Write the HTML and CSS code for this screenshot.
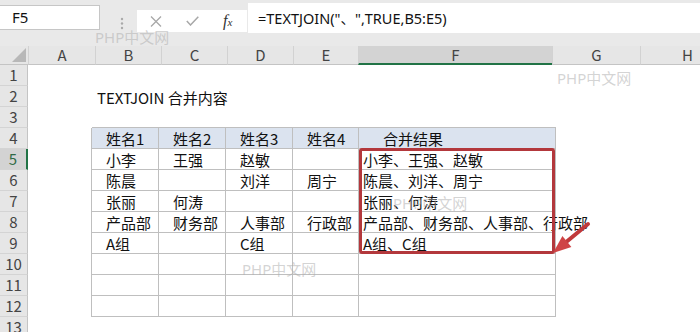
FILE: index.html
```html
<!DOCTYPE html>
<html lang="zh-CN">

<head>
    <meta charset="UTF-8">
    <meta name="viewport" content="width=device-width, initial-scale=1.0">
    <title>TEXTJOIN 合并内容</title>
    <link rel="stylesheet" href="styles.css">
</head>

<body>
    <div class="page">
        <!-- 编辑栏 -->
        <div class="topbar">
            <div class="namebox">F5</div>
            <div class="grip">
                <svg width="37" height="14" viewBox="0 0 37 14">
                    <circle cx="22" cy="2" r="1.2" fill="#a9a9a9"></circle>
                    <circle cx="22" cy="6.5" r="1.2" fill="#a9a9a9"></circle>
                    <circle cx="22" cy="11" r="1.2" fill="#a9a9a9"></circle>
                </svg>
            </div>
            <div class="fnbox">
                <svg class="fn-icon" width="12" height="11" viewBox="0 0 12 11">
                    <path d="M1 0.5 L11 10.5 M11 0.5 L1 10.5" stroke="#a8a8a8" stroke-width="1.3" fill="none"></path>
                </svg>
                <svg class="fn-icon" width="13" height="10" viewBox="0 0 13 10">
                    <path d="M0.8 5 L4.5 9 L12.3 0.8" stroke="#a8a8a8" stroke-width="1.5" fill="none"></path>
                </svg>
                <span class="fx"><i>f</i><i class="fx-x">x</i></span>
            </div>
            <div class="formula">=TEXTJOIN("、",TRUE,B5:E5)</div>
        </div>

        <!-- 列标 -->
        <div class="colheads">
            <div class="corner">
                <svg width="28" height="19" viewBox="0 0 28 19">
                    <polygon points="26,2 26,16 12,16" fill="#b8b8b8"></polygon>
                </svg>
            </div>
            <div class="hd w-a">A</div>
            <div class="hd w-b">B</div>
            <div class="hd w-c">C</div>
            <div class="hd w-d">D</div>
            <div class="hd w-e">E</div>
            <div class="hd w-f sel">F</div>
            <div class="hd w-g">G</div>
            <div class="hd w-h">H</div>
        </div>

        <!-- 表格区 -->
        <div class="sheet">
            <div class="rh">1</div>

            <div class="rh">2</div>
            <div></div>
            <div class="c title">TEXTJOIN 合并内容</div>

            <div class="rh">3</div>
            <div></div>
            <div class="top"></div>
            <div class="top"></div>
            <div class="top"></div>
            <div class="top"></div>
            <div class="top"></div>

            <div class="rh">4</div>
            <div class="left"></div>
            <div class="t th">姓名1</div>
            <div class="t th">姓名2</div>
            <div class="t th">姓名3</div>
            <div class="t th">姓名4</div>
            <div class="t th f head">合并结果</div>

            <div class="rh sel">5</div>
            <div class="left"></div>
            <div class="t">小李</div>
            <div class="t">王强</div>
            <div class="t">赵敏</div>
            <div class="t"></div>
            <div class="t f">小李、王强、赵敏</div>

            <div class="rh">6</div>
            <div class="left"></div>
            <div class="t">陈晨</div>
            <div class="t"></div>
            <div class="t">刘洋</div>
            <div class="t">周宁</div>
            <div class="t f">陈晨、刘洋、周宁</div>

            <div class="rh">7</div>
            <div class="left"></div>
            <div class="t">张丽</div>
            <div class="t">何涛</div>
            <div class="t"></div>
            <div class="t"></div>
            <div class="t f">张丽、何涛</div>

            <div class="rh">8</div>
            <div class="left"></div>
            <div class="t">产品部</div>
            <div class="t">财务部</div>
            <div class="t">人事部</div>
            <div class="t">行政部</div>
            <div class="t f">产品部、财务部、人事部、行政部</div>

            <div class="rh">9</div>
            <div class="left"></div>
            <div class="t">A组</div>
            <div class="t"></div>
            <div class="t">C组</div>
            <div class="t"></div>
            <div class="t f">A组、C组</div>

            <div class="rh">10</div>
            <div class="left"></div>
            <div class="t"></div>
            <div class="t"></div>
            <div class="t"></div>
            <div class="t"></div>
            <div class="t f"></div>

            <div class="rh">11</div>
            <div class="left"></div>
            <div class="t"></div>
            <div class="t"></div>
            <div class="t"></div>
            <div class="t"></div>
            <div class="t f"></div>

            <div class="rh">12</div>
            <div class="left"></div>
            <div class="t"></div>
            <div class="t"></div>
            <div class="t"></div>
            <div class="t"></div>
            <div class="t f"></div>

            <div class="rh">13</div>
        </div>

        <!-- 标注 -->
        <div class="redbox"></div>
        <svg class="arrow" width="48" height="40" viewBox="0 0 48 40">
            <line x1="40" y1="6" x2="17" y2="25" stroke="#c0393b" stroke-width="4" stroke-linecap="round"></line>
            <polygon points="5,35 14.4,18.1 23.4,28.9" fill="#cf4446"></polygon>
        </svg>

        <!-- 水印 -->
        <div class="wm wm1">PHP中文网</div>
        <div class="wm wm2">PHP中文网</div>
        <div class="wm wm3">PHP中文网</div>
        <div class="wm wm4">PHP中文网</div>
    </div>
</body>

</html>
```

FILE: styles.css
```css
* {
    margin: 0;
    padding: 0;
}

body {
    font-family: "Noto Sans CJK SC", "Noto Sans", sans-serif;
    font-size: 15px;
    color: #111;
    background-color: #fff;
    overflow: hidden;
}

.page {
    position: relative;
    width: 700px;
    height: 332px;
    overflow: hidden;
}

/* 编辑栏 */
.topbar {
    display: flex;
    align-items: flex-start;
    height: 46px;
    background-color: #e9e9e9;
}

.namebox {
    margin-top: 5px;
    width: 100px;
    height: 25px;
    box-sizing: border-box;
    padding-left: 12px;
    font-family: "Noto Sans", "Noto Sans CJK SC", sans-serif;
    line-height: 23px;
    background-color: #fff;
    border: 1px solid #c6c6c6;
    border-left: none;
}

.grip {
    width: 37px;
    margin-top: 17px;
    line-height: 0;
}

.fnbox {
    display: flex;
    align-items: center;
    gap: 24px;
    margin-top: 10px;
    width: 110px;
    height: 22px;
    box-sizing: border-box;
    padding-left: 13px;
    background-color: #fff;
}

.fx {
    font-family: "Liberation Serif", serif;
    font-size: 16px;
    color: #333;
    line-height: 1;
}

.fx-x {
    font-size: 11px;
}

.formula {
    flex: 1;
    margin-top: 3px;
    margin-left: 1px;
    height: 30px;
    padding-left: 10px;
    font-family: "Noto Sans", "Noto Sans CJK SC", sans-serif;
    font-size: 14.5px;
    line-height: 30px;
    background-color: #fff;
    white-space: nowrap;
}

/* 列标 */
.colheads {
    display: flex;
    height: 19px;
}

.corner {
    width: 28px;
    flex: none;
    background-color: #e6e6e6;
    border-bottom: 1px solid #c4c4c4;
    box-sizing: border-box;
    line-height: 0;
}

.hd {
    flex: none;
    box-sizing: border-box;
    background-color: #e6e6e6;
    border-left: 1px solid #d2d2d2;
    border-bottom: 1px solid #c4c4c4;
    text-align: center;
    font-size: 15px;
    line-height: 18px;
    color: #444;
}

.hd.sel {
    background-color: #d3d3d3;
    border-bottom: 2px solid #217346;
}

.w-a { width: 67px; }
.w-b { width: 66px; }
.w-c { width: 66px; }
.w-d { width: 66px; }
.w-e { width: 65px; }
.w-f { width: 194px; }
.w-g { width: 88px; }
.w-h { width: 94px; }

/* 单元格 */
.sheet {
    display: grid;
    grid-template-columns: 28px 64px 67px 67px 67px 66px 197px 1fr;
    grid-auto-rows: 21px;
}

.sheet > div {
    box-sizing: border-box;
    white-space: nowrap;
}

.rh {
    grid-column: 1;
    background-color: #e6e6e6;
    border-right: 1px solid #c4c4c4;
    border-bottom: 1px solid #d4d4d4;
    text-align: center;
    font-size: 15px;
    line-height: 20px;
    color: #444;
}

.rh.sel {
    background-color: #d3d3d3;
    border-right: 2px solid #217346;
    color: #2f6a45;
}

.c {
    padding-top: 1px;
    line-height: 21px;
}

.title {
    padding-left: 5px;
}

.top {
    border-bottom: 1px solid #bfbfbf;
}

.left {
    border-right: 1px solid #bfbfbf;
}

.t {
    padding-top: 1px;
    padding-left: 14px;
    line-height: 19px;
    border-right: 1px solid #bfbfbf;
    border-bottom: 1px solid #bfbfbf;
}

.t.f {
    padding-left: 4px;
}

.t.f.head {
    padding-left: 24px;
}

.th {
    background-color: #dbe3ef;
}

/* 标注 */
.redbox {
    position: absolute;
    left: 359px;
    top: 148px;
    width: 196px;
    height: 106px;
    box-sizing: border-box;
    border: 3px solid #b3383c;
    border-radius: 3px;
}

.arrow {
    position: absolute;
    left: 548px;
    top: 218px;
}

/* 水印 */
.wm {
    position: absolute;
    font-family: "Noto Sans", "Noto Sans CJK SC", sans-serif;
    font-size: 15px;
    line-height: 15px;
    color: rgba(175, 175, 175, 0.55);
    white-space: nowrap;
}

.wm1 { left: 95px; top: 30px; }
.wm2 { left: 557px; top: 71px; }
.wm3 { left: 242px; top: 262px; }
.wm4 { left: 393px; top: 196px; }
```
